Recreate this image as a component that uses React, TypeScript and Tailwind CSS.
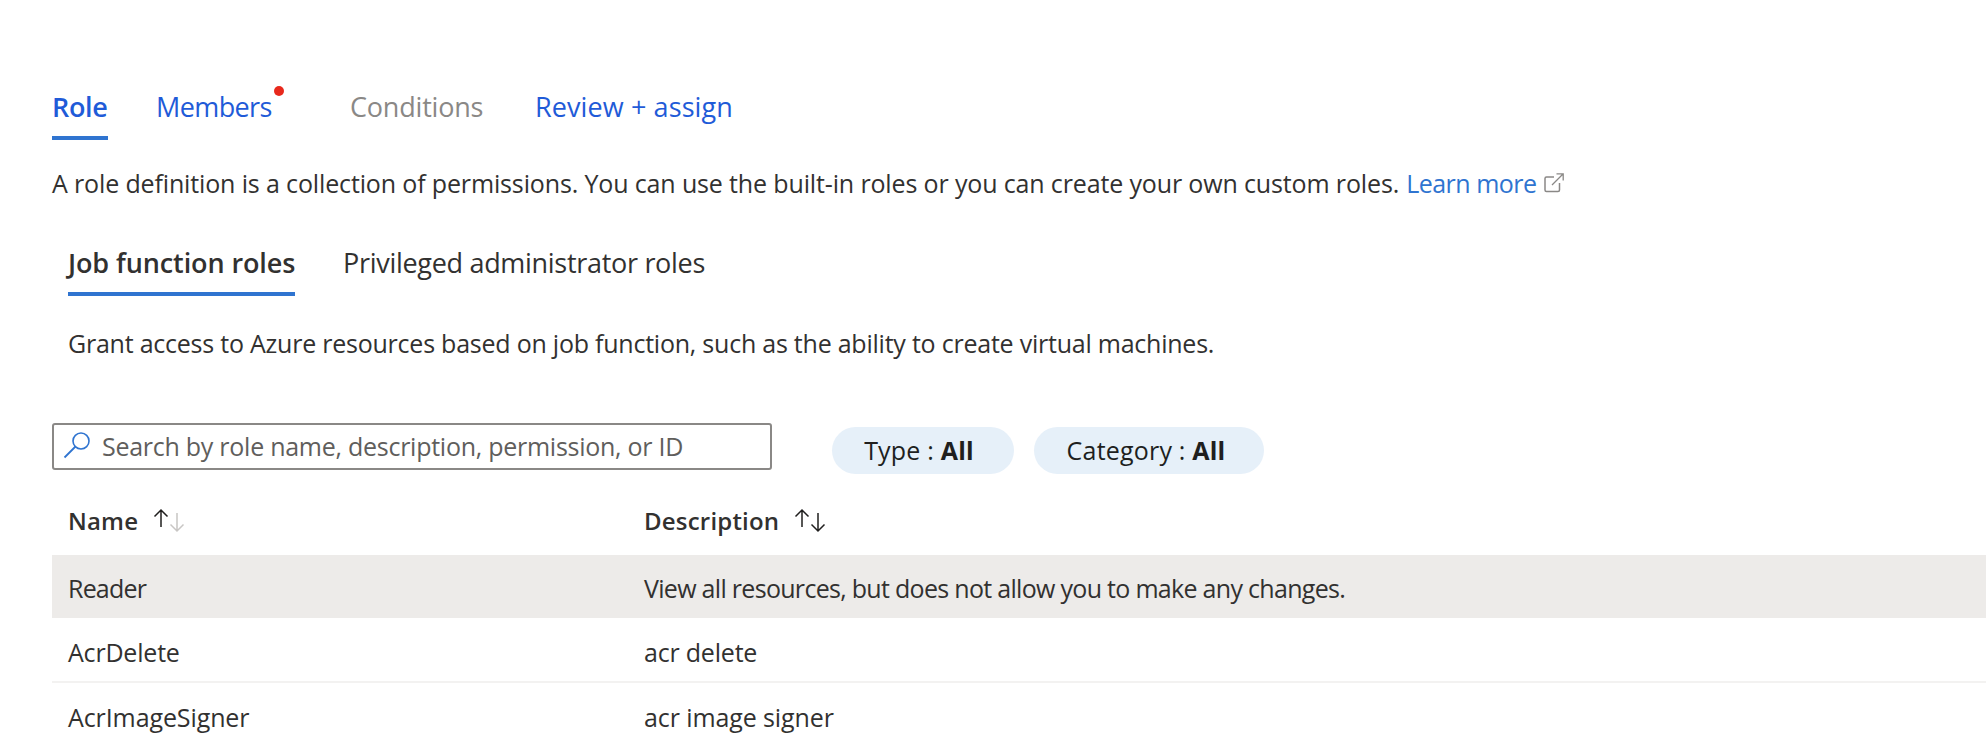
import React from 'react';

const font = { fontFamily: '"Open Sans", "Noto Sans", sans-serif' };

function ExternalIcon() {
  return (
    <svg width="22" height="22" viewBox="0 0 22 22" fill="none" className="ml-[6px] mt-[-2px]">
      <path d="M11 5H3.5A1.5 1.5 0 0 0 2 6.500V18a1.500 1.500 0 0 0 1.500 1.500H15a1.500 1.500 0 0 0 1.500-1.500V11" stroke="#8a8886" strokeWidth="1.500" />
      <path d="M9 13L20 2M13.500 1.800H20.200V8.500" stroke="#8a8886" strokeWidth="1.300" />
    </svg>
  );
}

function SearchIcon() {
  return (
    <svg width="28" height="28" viewBox="0 0 28 28" fill="none" className="ml-[-1px] mt-[-3px]">
      <circle cx="18" cy="10" r="8" stroke="#2f74d0" strokeWidth="1.600" />
      <path d="M12.500 15.500L1.500 26.500" stroke="#2f74d0" strokeWidth="1.800" />
    </svg>
  );
}

function SortArrows({ downDark }: { downDark?: boolean }) {
  return (
    <svg width="36" height="28" viewBox="0 0 36 28" fill="none">
      <path d="M9 20V3M2.500 9.500L9 3L15.500 9.500" stroke="#201f1e" strokeWidth="1.500" />
      <path d="M25 6V24M18.500 17.500L25 24L31.500 17.500" stroke={downDark ? '#201f1e' : '#c8c6c4'} strokeWidth="1.500" />
    </svg>
  );
}

const rows = [
  { name: 'Reader', desc: 'View all resources, but does not allow you to make any changes.', selected: true, nameClass: 'tracking-[-0.8px]', descClass: 'tracking-[-0.7px]' },
  { name: 'AcrDelete', desc: 'acr delete', nameClass: 'tracking-[-0.2px]', descClass: 'tracking-[-0.2px]' },
  { name: 'AcrImageSigner', desc: 'acr image signer', nameClass: 'tracking-[-0.1px]', descClass: 'tracking-[-0.1px]' },
];

export default function App() {
  return (
    <div className="w-[1986px] h-[734px] overflow-hidden bg-white pl-[52px] pt-[84px] text-[#323130] text-[25px]" style={font}>
      {/* wizard tabs */}
      <div className="flex h-[56px] text-[#1f5bd8] text-[27px]">
        <div className="w-[56px] h-full border-b-4 border-[#2f74d0] font-semibold whitespace-nowrap leading-[46px] tracking-[-0.3px]">Role</div>
        <div className="relative ml-[48px] w-[116px] whitespace-nowrap leading-[46px] tracking-[-0.6px]">
          Members
          <span className="absolute left-[118px] top-[2px] w-[10px] h-[10px] rounded-full bg-[#e8291c]"></span>
        </div>
        <div className="ml-[78px] w-[133px] text-[#8a8886] whitespace-nowrap leading-[46px] tracking-[-0.2px]">Conditions</div>
        <div className="ml-[52px] whitespace-nowrap leading-[46px] tracking-[0.1px]">Review + assign</div>
      </div>

      <div className="flex items-center h-[34px] mt-[27px] whitespace-nowrap">
        <span className="tracking-[-0.14px]">A role definition is a collection of permissions. You can use the built-in roles or you can create your own custom roles.</span>
        <span className="ml-[7px] text-[#2f74d0] tracking-[-0.5px]">Learn more</span>
        <ExternalIcon />
      </div>

      {/* role type tabs */}
      <div className="flex h-[64px] mt-[31px] ml-[16px] text-[27px]">
        <div className="w-[227px] border-b-4 border-[#2f74d0] font-semibold whitespace-nowrap leading-[62px] tracking-[-0.1px]">Job function roles</div>
        <div className="ml-[48px] whitespace-nowrap leading-[62px] tracking-[-0.3px]">Privileged administrator roles</div>
      </div>

      <div className="ml-[16px] mt-[31px] h-[34px] flex items-center whitespace-nowrap tracking-[-0.23px]">
        Grant access to Azure resources based on job function, such as the ability to create virtual machines.
      </div>

      {/* search and filters */}
      <div className="flex items-start mt-[62px]">
        <div className="flex items-center w-[720px] h-[47px] border-2 border-[#8a8886] rounded-[3px] pl-[10px]">
          <SearchIcon />
          <span className="ml-[11px] text-[#605e5c] whitespace-nowrap tracking-[-0.26px]">Search by role name, description, permission, or ID</span>
        </div>
        <div className="flex items-center justify-center ml-[60px] mt-[4px] pt-[1px] pr-[8px] w-[182px] h-[47px] rounded-full bg-[#e6f0f9] text-[#201f1e] whitespace-nowrap tracking-[0.2px]">
          Type :&nbsp;<b className="font-bold">All</b>
        </div>
        <div className="flex items-center justify-center ml-[20px] mt-[4px] pt-[1px] pr-[6px] w-[230px] h-[47px] rounded-full bg-[#e6f0f9] text-[#201f1e] whitespace-nowrap tracking-[0.2px]">
          Category :&nbsp;<b className="font-bold">All</b>
        </div>
      </div>

      {/* role table */}
      <div className="flex items-center h-[81px] pl-[16px] pt-[12px] font-semibold text-[24px] tracking-[0.2px]">
        <div className="flex items-center w-[576px]">
          Name
          <span className="ml-[14px]"><SortArrows /></span>
        </div>
        <div className="flex items-center">
          Description
          <span className="ml-[14px]"><SortArrows downDark /></span>
        </div>
      </div>
      {rows.map(r => (
        <div
          key={r.name}
          className={`flex items-center pl-[16px] whitespace-nowrap ${r.selected ? 'h-[63px] pt-[5px] bg-[#edebe9]' : 'h-[65px] pt-[7px] border-b-2 border-[#f3f2f1]'}`}
        >
          <div className={`w-[576px] ${r.nameClass}`}>{r.name}</div>
          <div className={r.descClass}>{r.desc}</div>
        </div>
      ))}
    </div>
  );
}
